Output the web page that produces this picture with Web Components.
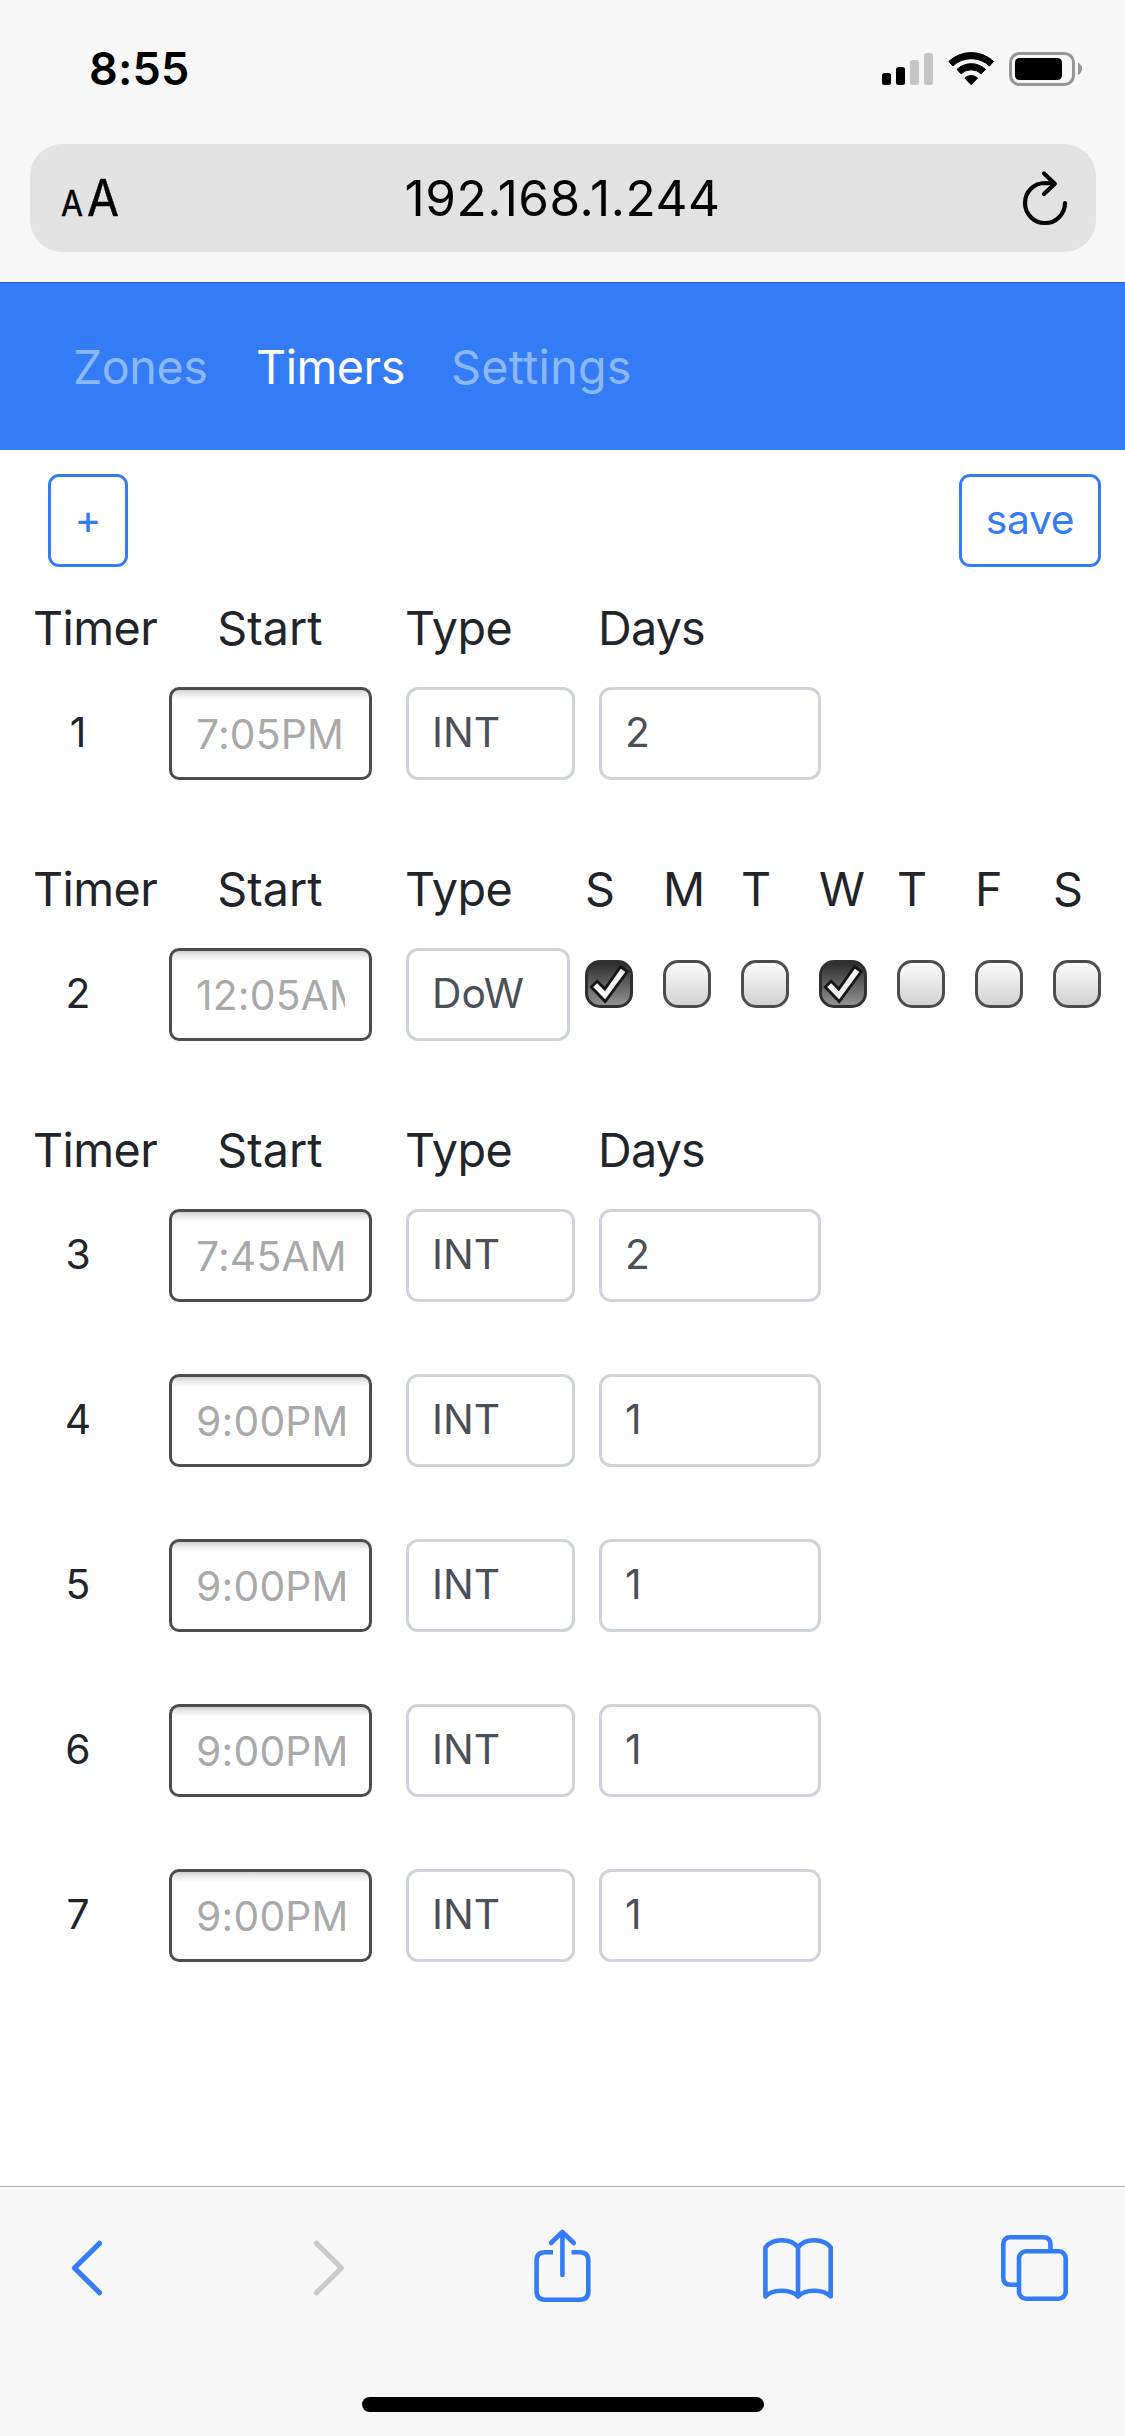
<!DOCTYPE html>
<html lang="en">
<head>
<meta charset="utf-8">
<title>Timers</title>
<style>
  html, body { margin: 0; background: #fff; }
  body { width: 1125px; height: 2436px; overflow: hidden; font-family: Inter, "Liberation Sans", sans-serif; color: #212529; }
</style>
</head>
<body>
<timer-app></timer-app>
<script>
const define = (name, html, setup) => {
  const tpl = document.createElement('template');
  tpl.innerHTML = html;
  customElements.define(name, class extends HTMLElement {
    constructor() {
      super();
      this.attachShadow({ mode: 'open' }).append(tpl.content.cloneNode(true));
    }
    connectedCallback() { if (setup) setup(this, this.shadowRoot); }
  });
};

define('status-bar', `
<style>
  :host { display: flex; height: 144px; box-sizing: border-box; padding: 0 41px 0 89px; justify-content: space-between; align-items: flex-start; color: #000; }
  .time { font-size: 45px; line-height: 60px; font-weight: 600; margin-top: 39px; letter-spacing: 0.2px; }
  svg { display: block; margin-top: 48px; }
</style>
<span class="time">8:55</span>
<svg width="204" height="42" viewBox="880 48 204 42">
  <rect x="882" y="73" width="9" height="12" rx="2.5"/>
  <rect x="896" y="67" width="9" height="18" rx="2.5"/>
  <rect x="910" y="60" width="9" height="25" rx="2.5" fill="#c4c4c4"/>
  <rect x="924" y="53" width="9" height="32" rx="2.5" fill="#c4c4c4"/>
  <path d="M948.8 61.5 A32.5 32.5 0 0 1 993.6 61.5 L989.5 66 A26.5 26.5 0 0 0 952.9 66 Z" stroke="#000" stroke-width="1" stroke-linejoin="round"/>
  <path d="M957 69.4 A20.5 20.5 0 0 1 985.4 69.4 L981.3 73.9 A14.5 14.5 0 0 0 961.1 73.9 Z" stroke="#000" stroke-width="1" stroke-linejoin="round"/>
  <path d="M964.8 78 A9.4 9.4 0 0 1 977.6 78 L971.2 84.700 Z" stroke="#000" stroke-width="1" stroke-linejoin="round"/>
  <rect x="1010.5" y="53.5" width="63" height="31" rx="9" fill="none" stroke="#969696" stroke-width="3"/>
  <rect x="1015" y="58" width="47" height="22" rx="4.5"/>
  <path d="M1078 62.5 C1083.4 65 1083.4 72.5 1078 75 Z" fill="#969696"/>
</svg>`);

define('address-bar', `
<style>
  :host { display: flex; margin: 0 29.5px; height: 108px; border-radius: 32px; background: #e2e2e2; color: #000; align-items: center; }
  .side { width: 120px; flex: none; display: flex; align-items: baseline; box-sizing: border-box; height: 108px; line-height: 108px; padding-left: 31px; }
  .side span { transform: scaleX(0.91); transform-origin: 0 50%; -webkit-text-stroke: 0.5px #000; }
  .small { font-size: 35px; width: 26px; }
  .big { font-size: 51px; }
  .host { flex: 1; text-align: center; font-size: 49.5px; line-height: 108px; letter-spacing: 0.52px; }
  svg { display: block; }
  .end { width: 120px; flex: none; display: flex; justify-content: flex-end; }
</style>
<div class="side"><span class="small">A</span><span class="big">A</span></div>
<div class="host"><slot></slot></div>
<div class="end"><svg width="78" height="108" viewBox="1018 144 78 108" fill="none" stroke="#000" stroke-width="4.2" stroke-linecap="round" stroke-linejoin="round">
  <path d="M1065 203 A20 20 0 1 1 1045 183 L1054 183.5"/>
  <path d="M1044 173.5 L1054.8 183.7 L1044 194"/>
</svg></div>`);

define('nav-bar', `
<style>
  :host { display: flex; height: 167px; margin-top: 30px; border-top: 1px solid #2b5eb8; background: #347bf6; align-items: center; padding-left: 73px; gap: 49px; }
</style><slot></slot>`);
define('nav-link', `
<style>
  :host { display: block; width: var(--w); white-space: nowrap; font-size: 46.7px; line-height: 72px; color: #8ab8fa; letter-spacing: var(--ls, 0); }
  :host([active]) { color: #fff; }
</style><slot></slot>`);

define('outline-button', `
<style>
  :host { display: flex; box-sizing: border-box; height: 93px; width: var(--w); border: 3px solid #347bf6; border-radius: 11px; justify-content: center; color: #347bf6; font-size: 40.8px; line-height: 84px; letter-spacing: var(--ls, 0); }
</style><slot></slot>`);

define('field-box', `
<style>
  :host { display: block; box-sizing: border-box; width: var(--w); height: 93px; border: 3px solid #ced4da; border-radius: 12px; padding: 0 24px 0 23px; color: #495057; font-size: 40.8px; line-height: 84px; background: #fff; }
  :host([time]) { border-color: #4c4c4c; border-radius: 10px; padding: 0 24px; color: #a9a9a9; line-height: 88px; letter-spacing: 0.2px;
    background: linear-gradient(#cfcfcf, #e9e9e9 4px, #fff 10px) #fff; }
  div { overflow: hidden; white-space: nowrap; height: 87px; }
</style><div><slot></slot></div>`);

define('day-check', `
<style>
  :host { display: block; box-sizing: border-box; width: 48px; height: 48px; border: 3px solid #4c4c4c; border-radius: 15px; background: linear-gradient(#fdfdfd, #cfcfcf); background-origin: border-box; }
  :host([checked]) { border-color: #303030; background: linear-gradient(#2e2e2e, #929292); }
  svg { display: none; margin: -3px; }
  :host([checked]) svg { display: block; }
</style>
<svg width="48" height="48" viewBox="0 0 48 48"><path d="M6.3 27 L12.2 21.3 L19.8 29 L35.6 6.8 L42.3 11.5 L20.2 41.5 Z" fill="#f3f3f3" stroke="#161616" stroke-width="2.8"/></svg>`);

define('timer-row', `
<style>
  :host { display: block; margin-bottom: 72px; padding-left: 33px; }
  .grid { display: grid; grid-template-columns: 136px 237px 193px auto; justify-content: start; }
  .dow { grid-template-columns: 136px 237px 179px auto; }
  .head { height: 96px; font-size: 46.7px; line-height: 74px; white-space: nowrap; }
  .timer { letter-spacing: -0.6px; }
  .start { width: 202px; text-align: center; }
  .type { margin-left: -1px; letter-spacing: -0.5px; }
  .day { margin-left: -1px; letter-spacing: -0.8px; }
  .num { width: 90px; text-align: center; font-size: 40.8px; line-height: 90px; }
  .days { display: grid; grid-template-columns: repeat(7, 78px); }
  .checks { padding-top: 12px; }
</style><div id="r"></div>`, (el, root) => {
  const a = n => el.getAttribute(n);
  const dow = el.hasAttribute('dow');
  const head = el.hasAttribute('head') ? `<div class="grid head ${dow ? 'dow' : ''}">
    <span class="timer">Timer</span><span class="start">Start</span><span class="type">Type</span>
    ${dow ? `<div class="days">${[...'SMTWTFS'].map(d => `<span>${d}</span>`).join('')}</div>` : '<span class="day">Days</span>'}
  </div>` : '';
  const last = dow
    ? `<div class="days checks">${[...a('dow')].map(c => `<day-check ${c === '1' ? 'checked' : ''}></day-check>`).join('')}</div>`
    : `<field-box style="--w:222px">${a('days')}</field-box>`;
  root.getElementById('r').innerHTML = `${head}<div class="grid ${dow ? 'dow' : ''}">
    <span class="num">${a('n')}</span><field-box time style="--w:203px">${a('start')}</field-box>
    <field-box style="--w:${dow ? 164 : 169}px">${dow ? 'DoW' : 'INT'}</field-box>${last}</div>`;
});

define('tool-bar', `
<style>
  :host { display: flex; flex-direction: column; height: 249px; border-top: 1px solid #b0b0b0; background: #f7f7f7; }
  .icons { display: flex; padding: 38px 52px 0 66px; height: 172px; box-sizing: border-box; }
  svg { display: block; flex: none; fill: none; stroke: #347bf6; stroke-width: 4.6; stroke-linecap: round; stroke-linejoin: round; }
  .back { margin-right: 204px; }
  .forward { margin-right: 180px; }
  .share { margin-right: 166px; }
  .book { margin-right: 161px; }
  .home { width: 402px; height: 15px; border-radius: 8px; background: #000; margin: 38px auto 0; }
</style>
<div class="icons">
  <svg class="back" width="40" height="80" viewBox="66 2225 40 80"><path stroke-width="5.2" d="M99.5 2243.3 L74.5 2268 L99.5 2292.7"/></svg>
  <svg class="forward" width="40" height="80" viewBox="310 2225 40 80"><path stroke="#cacaca" stroke-width="5.2" d="M316.5 2243.3 L341.5 2268 L316.5 2292.7"/></svg>
  <svg class="share" width="64" height="80" viewBox="530 2225 64 80"><path stroke-linecap="butt" d="M553 2252.3 H545 Q536.6 2252.3 536.6 2260.7 V2291.3 Q536.6 2299.7 545 2299.7 H580 Q588.3 2299.7 588.3 2291.3 V2260.7 Q588.3 2252.3 580 2252.3 H571.5"/><path d="M562.4 2275 V2232.5 M551 2243 L562.4 2232 L573.8 2243"/></svg>
  <svg class="book" width="76" height="80" viewBox="760 2225 76 80"><path d="M765.4 2296.5 V2247.5 C772 2238 791 2237.5 798 2247.5 C805 2237.5 824 2238 830.7 2247.5 V2296.5 C824 2289 805 2288.5 798 2296.5 C791 2288.5 772 2289 765.4 2296.5 Z M798 2247.5 V2296.5"/></svg>
  <svg width="76" height="80" viewBox="997 2225 76 80"><rect x="1019" y="2251.3" width="46.7" height="47.4" rx="7"/><path stroke-linecap="butt" d="M1017 2284.7 H1010.5 Q1003.3 2284.7 1003.3 2277.5 V2244.5 Q1003.3 2237.3 1010.5 2237.3 H1043.2 Q1050.500 2237.3 1050.5 2244.5 V2249.5"/></svg>
</div>
<div class="home"></div>`);

define('timer-app', `
<style>
  :host { display: flex; flex-direction: column; width: 1125px; height: 2436px; }
  header { background: #f7f7f7; }
  main { flex: 1; padding-top: 24px; min-height: 0; overflow: hidden; }
  .actions { display: flex; justify-content: space-between; padding: 0 24px 0 48px; margin-bottom: 24px; }
</style>
<header><status-bar></status-bar><address-bar>192.168.1.244</address-bar>
<nav-bar><nav-link style="--w:134px;--ls:-0.5px">Zones</nav-link><nav-link active style="--w:146px;--ls:-0.5px">Timers</nav-link><nav-link style="--ls:0.25px">Settings</nav-link></nav-bar></header>
<main>
  <div class="actions"><outline-button style="--w:80px">+</outline-button><outline-button style="--w:142px;--ls:-0.3px">save</outline-button></div>
  <timer-row head n="1" start="7:05PM" days="2"></timer-row>
  <timer-row head n="2" start="12:05AM" dow="1001000"></timer-row>
  <timer-row head n="3" start="7:45AM" days="2"></timer-row>
  <timer-row n="4" start="9:00PM" days="1"></timer-row>
  <timer-row n="5" start="9:00PM" days="1"></timer-row>
  <timer-row n="6" start="9:00PM" days="1"></timer-row>
  <timer-row n="7" start="9:00PM" days="1"></timer-row>
</main>
<tool-bar></tool-bar>`);
</script>
</body>
</html>
